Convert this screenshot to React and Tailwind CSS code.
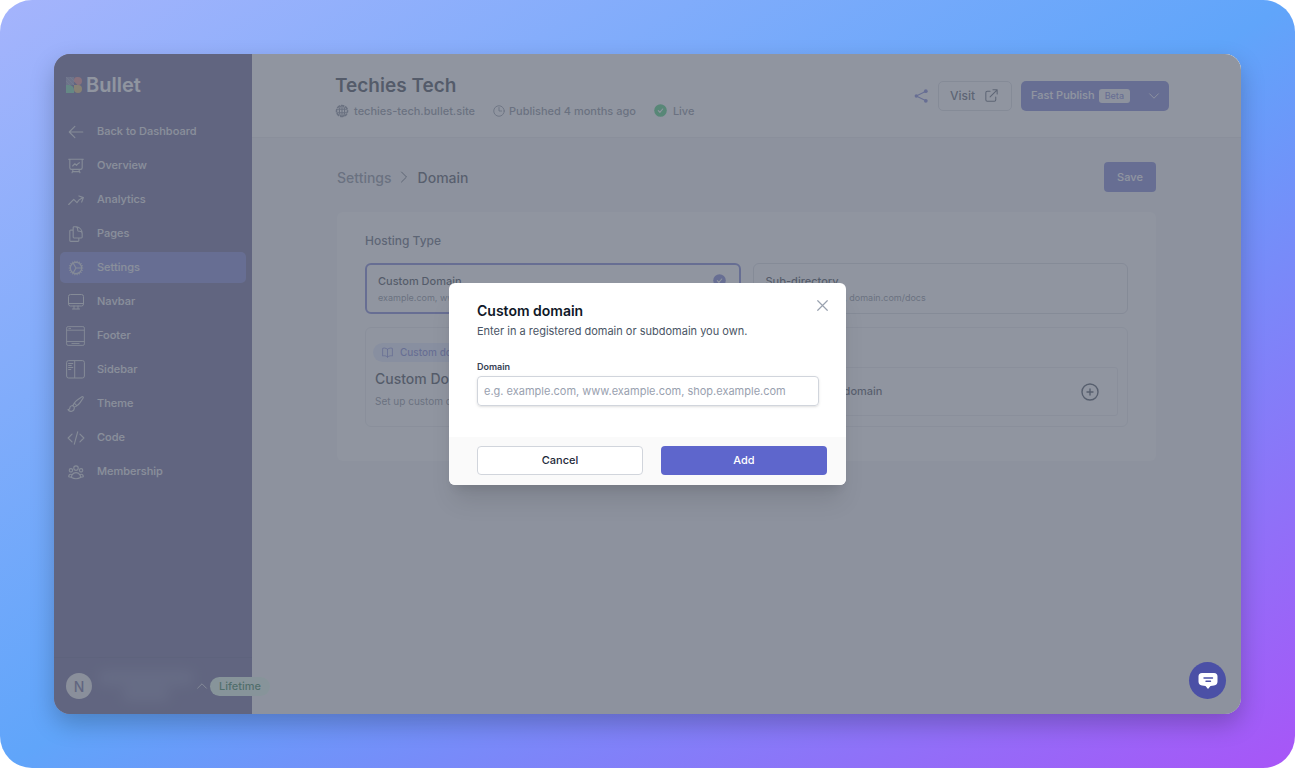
import { useState } from 'react'
import clsx from 'clsx'
import { HiOutlineExternalLink } from 'react-icons/hi'
import {
  HiOutlineArrowLeft, HiOutlinePresentationChartLine, HiOutlineArrowTrendingUp,
  HiOutlineDocumentDuplicate, HiOutlineCog, HiOutlinePaintBrush, HiOutlineCodeBracket,
  HiOutlineUserGroup, HiOutlineClock, HiOutlineChevronRight, HiOutlineChevronDown,
  HiOutlineChevronUp, HiOutlineBookOpen, HiOutlineXMark,
} from 'react-icons/hi2'

function MonitorIcon() {
  return (
    <svg width="18" height="18" viewBox="0 0 18 18" fill="none" stroke="currentColor" strokeLinejoin="round">
      <rect x="1.500" y="1.500" width="15" height="11.500" rx="2" />
      <path d="M1.500 10.500h15M7 13v2.500M11 13v2.500M5.500 16h7" strokeLinecap="round" />
    </svg>
  )
}

function FooterIcon() {
  return (
    <svg width="19" height="20" viewBox="0 0 19 20" fill="none" stroke="currentColor" strokeWidth="0.9">
      <rect x="0.6" y="0.6" width="17.800" height="18.800" rx="1.500" />
      <path d="M0.6 4.200h17.800M0.6 15.500h17.800M2.500 2.400h2.500M5.500 17.500h8" />
    </svg>
  )
}

function SidebarIcon() {
  return (
    <svg width="19" height="19" viewBox="0 0 19 19" fill="none" stroke="currentColor">
      <rect x="0.6" y="0.6" width="17.800" height="17.400" rx="2" />
      <path d="M8.700 0.6v17.400M2.200 3.500h5M2.200 5.500h3.500M2.200 7.500h5M2.200 9.500h3" />
    </svg>
  )
}

function GlobeIcon() {
  return (
    <svg width="14" height="14" viewBox="0 0 14 14" fill="none" stroke="currentColor">
      <circle cx="7" cy="7" r="5.500" strokeWidth="1.600" strokeDasharray="3.400 0.920" strokeDashoffset="1.700" />
      <ellipse cx="7" cy="7" rx="2.600" ry="5.500" strokeWidth="1.200" />
      <path d="M1.500 5.300h11M1.500 8.700h11M7 1.500v11" strokeWidth="1.100" />
    </svg>
  )
}

function ShareIcon() {
  return (
    <svg width="14" height="14" viewBox="0 0 14 14" fill="currentColor" stroke="currentColor">
      <path d="M12 2.200 2.200 7l9.800 4.800" fill="none" strokeWidth="1.100" />
      <circle cx="2.300" cy="7" r="1.700" stroke="none" />
      <circle cx="11.800" cy="2.200" r="1.900" stroke="none" />
      <circle cx="11.800" cy="11.800" r="1.900" stroke="none" />
    </svg>
  )
}

function CheckBadge() {
  return (
    <svg width="13" height="13" viewBox="0 0 13 13" fill="none">
      <circle cx="6.500" cy="6.500" r="6.300" fill="currentColor" />
      <path d="m4.300 6.700 1.600 1.600 2.800-3.300" stroke="#fff" strokeWidth="1.100" strokeLinecap="round" strokeLinejoin="round" />
    </svg>
  )
}

function AddIcon() {
  return (
    <svg width="18" height="18" viewBox="0 0 18 18" fill="none" stroke="currentColor" strokeWidth="1.400" strokeLinecap="round">
      <circle cx="9" cy="9" r="8" />
      <path d="M9 6v6M6 9h6" />
    </svg>
  )
}

function BulletMark() {
  return (
    <svg width="16" height="16" viewBox="0 0 16 16">
      <rect width="8" height="8" fill="#7479a8" />
      <path d="m0 0 8 8M0 4l4 4M4 0l4 4" stroke="#8f93bd" strokeWidth="0.8" />
      <path d="M8 3a3 3 0 0 1 3-3h1a4 4 0 0 1 4 4 4 4 0 0 1-4 4h-.5L8 4.500z" fill="#dd6f73" />
      <path d="M0 8h3a5 5 0 0 1 5 5v3H0z" fill="#55c995" />
      <path d="M12 8a4 4 0 1 1-4 4V8z" fill="#d9b04f" />
    </svg>
  )
}

const navItems = [
  { label: 'Back to Dashboard', icon: <HiOutlineArrowLeft size={18} /> },
  { label: 'Overview', icon: <HiOutlinePresentationChartLine size={18} /> },
  { label: 'Analytics', icon: <HiOutlineArrowTrendingUp size={18} /> },
  { label: 'Pages', icon: <HiOutlineDocumentDuplicate size={18} /> },
  { label: 'Settings', icon: <HiOutlineCog size={18} />, active: true },
  { label: 'Navbar', icon: <MonitorIcon /> },
  { label: 'Footer', icon: <FooterIcon /> },
  { label: 'Sidebar', icon: <SidebarIcon /> },
  { label: 'Theme', icon: <HiOutlinePaintBrush size={18} /> },
  { label: 'Code', icon: <HiOutlineCodeBracket size={18} /> },
  { label: 'Membership', icon: <HiOutlineUserGroup size={18} /> },
]

function Sidebar() {
  return (
    <aside className="w-[198px] shrink-0 flex flex-col bg-[#45427f] text-gray-200">
      <a href="#" className="flex items-center gap-1 pt-[18px] pl-3 h-[44px] text-[20px] font-semibold text-white">
        <BulletMark />
        Bullet
      </a>
      <nav className="mt-[18px] px-[6px] flex flex-col gap-[3px]">
        {navItems.map(({ label, icon, active }) => (
          <a
            key={label}
            href="#"
            className={clsx(
              'h-[31px] px-[6px] rounded-[5px] flex items-center gap-3 text-[11px] font-medium',
              active && 'bg-[#5e66cc]',
            )}
          >
            <span className="w-[19px] flex justify-center text-gray-300">{icon}</span>
            {label}
          </a>
        ))}
      </nav>
      <div className="mt-auto h-[57px] pl-3 flex items-center border-t border-[#3b3873]">
        <span className="size-[26px] shrink-0 rounded-full bg-gray-200 text-[#45427f] text-[14px] font-medium flex items-center justify-center">N</span>
        <div className="ml-[6px] w-[96px] shrink-0 flex flex-col items-center blur-[6px]">
          <div className="h-4 w-full rounded-full bg-[#5a5c94]" />
          <div className="h-4 w-12 rounded-full bg-[#5a5c94]" />
        </div>
        <HiOutlineChevronUp size={14} className="ml-[1px] shrink-0" />
        <span className="relative ml-[1px] h-[19px] px-[9px] shrink-0 rounded-full bg-green-100 text-green-800 text-[11px] font-medium flex items-center">Lifetime</span>
      </div>
    </aside>
  )
}

function Header() {
  return (
    <header className="h-[84px] pl-[83px] pr-[72px] flex items-center justify-between bg-white border-b border-gray-200">
      <div className="pt-[3px]">
        <h1 className="text-[19px] leading-6 font-semibold text-gray-900">Techies Tech</h1>
        <div className="mt-[3px] flex items-center text-[11px] leading-5 font-medium text-gray-500">
          <GlobeIcon />
          <a href="#" className="ml-[5px]">techies-tech.bullet.site</a>
          <HiOutlineClock size={14} className="ml-[17px]" />
          <span className="ml-[3px]">Published 4 months ago</span>
          <span className="ml-[18px] text-[#22c55e]"><CheckBadge /></span>
          <span className="ml-[6px]">Live</span>
        </div>
      </div>
      <div className="flex items-center">
        <button type="button" aria-label="Share" className="text-[#5e66cc]"><ShareIcon /></button>
        <button type="button" className="ml-[10px] h-[30px] w-[74px] rounded-[5px] border border-gray-300 bg-white text-[12px] font-medium text-gray-700 flex items-center justify-center gap-2">
          Visit
          <HiOutlineExternalLink size={17} strokeWidth={1.5} />
        </button>
        <button type="button" className="ml-[9px] h-[30px] w-[148px] pl-[10px] pr-2 rounded-[5px] bg-[#5e66cc] text-[11px] font-medium text-white flex items-center">
          Fast Publish
          <span className="ml-1 h-[14px] px-[6px] rounded-[3px] bg-gray-100 text-[9px] text-[#5e66cc] flex items-center">Beta</span>
          <HiOutlineChevronDown size={14} className="ml-auto" />
        </button>
      </div>
    </header>
  )
}

function HostingOption({ title, example, selected }) {
  return (
    <button
      type="button"
      className={clsx(
        'h-[51px] rounded-md flex items-start justify-between text-left',
        selected ? 'px-[11px] border-2 border-[#5e66cc] pt-2' : 'px-3 border border-gray-300 pt-[9px]',
      )}
    >
      <span className="flex flex-col">
        <span className="text-[11px] leading-4 font-medium text-gray-900">{title}</span>
        <span className="text-[9px] leading-[18px] text-gray-500">{example}</span>
      </span>
      {selected && <span className="pt-[1px] pr-[2px] text-[#5e66cc]"><CheckBadge /></span>}
    </button>
  )
}

function DomainSettings() {
  return (
    <main className="px-[85px] pt-6">
      <div className="h-[30px] flex items-center justify-between">
        <nav aria-label="Breadcrumb" className="flex items-center text-[14px] font-medium">
          <a href="#" className="text-gray-500">Settings</a>
          <HiOutlineChevronRight size={16} className="mx-1 text-gray-700" />
          <span className="ml-[2px] text-gray-800">Domain</span>
        </nav>
        <button type="button" className="h-[30px] w-[52px] rounded-[4px] bg-[#5e66cc] text-[11px] font-medium text-white">Save</button>
      </div>

      <section className="mt-5 p-7 pt-5 h-[249px] rounded-md bg-white">
        <h2 className="text-[12px] leading-[18px] font-medium text-gray-700">Hosting Type</h2>
        <div className="mt-[13px] grid grid-cols-2 gap-3">
          <HostingOption title="Custom Domain" example="example.com, www.example.com" selected />
          <HostingOption title="Sub-directory" example="example.com/blog, domain.com/docs" />
        </div>

        <div className="mt-[13px] h-[100px] rounded-md border border-gray-200 grid grid-cols-2">
          <div className="pl-[9px] pt-[15px] min-w-0">
            <span className="-ml-[2px] h-[19px] w-fit px-2 rounded-full bg-[#e0e7ff] text-[10px] font-medium text-[#5e66cc] flex items-center gap-[6px]">
              <HiOutlineBookOpen size={13} />
              Custom domain docs
            </span>
            <h3 className="mt-[7px] text-[14px] leading-5 font-medium text-gray-900">Custom Domain</h3>
            <p className="mt-1 text-[10px] leading-4 text-gray-500">Set up custom domain for your site</p>
          </div>
          <div className="pt-[39px] pr-[9px]">
            <div className="h-[49px] px-[18px] border border-gray-200 rounded-[3px] flex items-center justify-between text-[11px] font-medium text-gray-800">
              <span className="pl-3">Add custom domain</span>
              <button type="button" aria-label="Add custom domain"><AddIcon /></button>
            </div>
          </div>
        </div>
      </section>
    </main>
  )
}

function DomainDialog() {
  const [domain, setDomain] = useState('')

  return (
    <div role="dialog" aria-labelledby="dialog-title" className="w-[397px] rounded-md overflow-hidden bg-white shadow-xl">
      <div className="pt-3 pb-[31px] pl-7 pr-[27px]">
        <div className="flex justify-between">
          <h2 id="dialog-title" className="pt-[6px] text-[14px] leading-5 font-semibold text-gray-900">Custom domain</h2>
          <button type="button" aria-label="Close" className="-mr-[14px] size-5 text-gray-400">
            <HiOutlineXMark size={19} />
          </button>
        </div>
        <p className="text-[11px] leading-5 text-gray-600">Enter in a registered domain or subdomain you own.</p>
        <label htmlFor="domain" className="mt-[18px] block text-[9px] leading-4 font-semibold text-gray-700">Domain</label>
        <input
          id="domain"
          type="text"
          value={domain}
          onChange={(e) => setDomain(e.target.value)}
          placeholder="e.g. example.com, www.example.com, shop.example.com"
          className="mt-[1px] h-[30px] w-full px-[6px] rounded-[4px] border border-gray-300 shadow-sm text-[11px] text-gray-900 placeholder:text-gray-400"
        />
      </div>
      <div className="pt-[9px] pb-[10px] pl-7 pr-[19px] grid grid-cols-2 gap-[18px] bg-[#fafafa] text-[11px] font-medium">
        <button type="button" className="h-[29px] rounded-[4px] border border-gray-300 bg-white text-gray-800">Cancel</button>
        <button type="button" className="h-[29px] rounded-[4px] bg-[#5e66cc] text-white">Add</button>
      </div>
    </div>
  )
}

export default function App() {
  return (
    <div className="min-h-screen p-[54px] flex rounded-[32px] bg-linear-to-br/srgb from-[#a5b4fc] via-[#60a5fa] to-[#a855f7] font-['Inter',sans-serif]">
      <div className="relative flex-1 flex rounded-2xl overflow-hidden bg-gray-100 shadow-[0_10px_24px_rgba(0,0,0,0.22)]">
        <Sidebar />
        <div className="flex-1 min-w-0">
          <Header />
          <DomainSettings />
        </div>

        <div className="absolute inset-0 flex items-center justify-center bg-[rgba(107,114,128,0.75)]">
          <DomainDialog />
        </div>

        <button type="button" aria-label="Open chat" className="absolute right-[15px] bottom-[15px] size-[37px] rounded-full bg-[#4b50a6] flex items-center justify-center">
          <svg width="20" height="18" viewBox="0 0 20 18">
            <path d="M4 1h12q3.500 0 3.500 3.500v5q0 3.500-3.500 3.900l-3.500.5L10 17l-2.500-3.100-3.500-.5Q.5 13 .5 9.500v-5Q.5 1 4 1z" fill="#fff" />
            <path d="M6 6h8.500M8 9.300h4.500" stroke="#4b50a6" strokeWidth="1.400" strokeLinecap="round" />
          </svg>
        </button>
      </div>
    </div>
  )
}
